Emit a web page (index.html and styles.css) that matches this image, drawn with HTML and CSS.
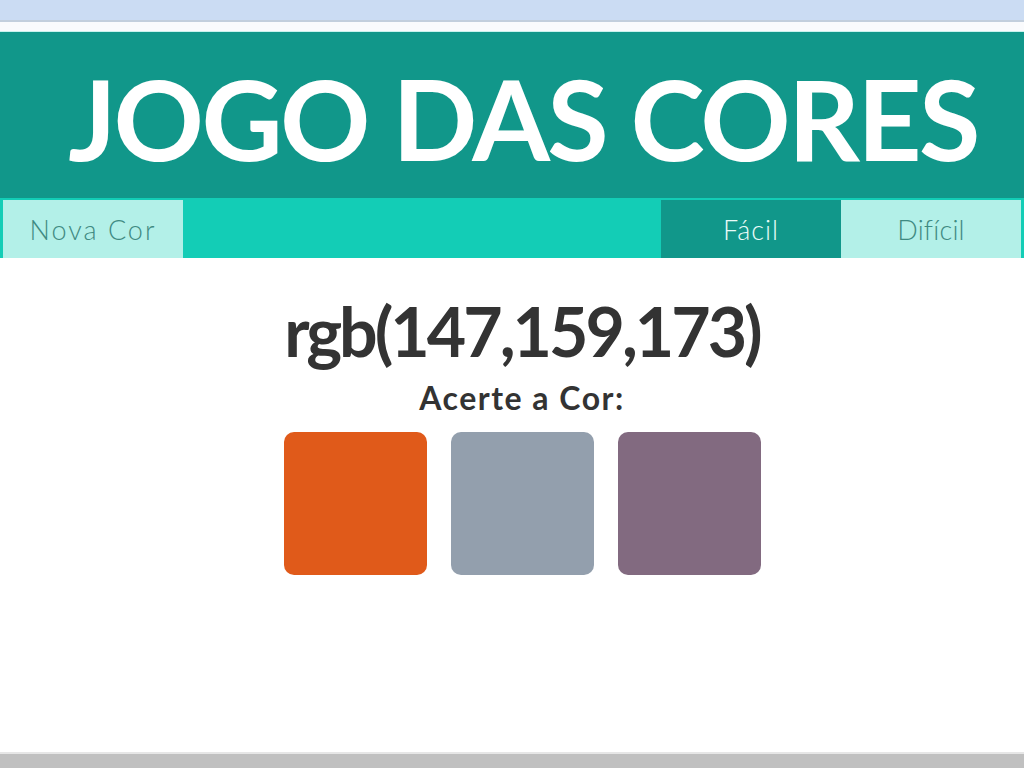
FILE: index.html
```html
<!DOCTYPE html>
<html lang="pt">
<head>
<meta charset="utf-8">
<title>Jogo das Cores</title>
<link rel="stylesheet" href="styles.css">
</head>
<body>
<div class="page">
  <div class="chrome-top"></div>
  <div class="chrome-gap"></div>
  <header class="header">
    <h1 class="title">JOGO DAS CORES</h1>
  </header>
  <nav class="nav">
    <button class="btn btn-light btn-new">Nova Cor</button>
    <span class="nav-spacer"></span>
    <button class="btn btn-active">Fácil</button>
    <button class="btn btn-light btn-hard">Difícil</button>
  </nav>
  <main class="main">
    <h2 class="rgb">rgb(147,159,173)</h2>
    <p class="hint">Acerte a Cor:</p>
    <div class="squares">
      <div class="square sq-orange"></div>
      <div class="square sq-grey"></div>
      <div class="square sq-purple"></div>
    </div>
  </main>
  <div class="chrome-bottom"></div>
</div>
</body>
</html>
```

FILE: styles.css
```css
* { box-sizing: border-box; }
html, body { margin: 0; padding: 0; }
body {
  width: 1024px;
  height: 768px;
  overflow: hidden;
  background: #ffffff;
  font-family: "Lato", "Noto Sans", sans-serif;
}
.page {
  display: flex;
  flex-direction: column;
  height: 768px;
}
.chrome-top {
  height: 22px;
  background: #cbdcf3;
  border-bottom: 2px solid #c3cfdd;
}
.chrome-gap {
  height: 10px;
  background: #fafbfd;
  border-bottom: 1px solid #c9f3ee;
}
.header {
  height: 166px;
  background: #11978a;
  display: flex;
  align-items: center;
  justify-content: center;
  padding-left: 22px;
}
.title {
  margin: 0;
  color: #ffffff;
  font-family: "Lato", sans-serif;
  font-weight: 700;
  font-size: 112px;
  line-height: 1;
  letter-spacing: -2.7px;
  padding-top: 6px;
}
.nav {
  height: 60px;
  background: #13cdb6;
  display: flex;
  padding: 2px 3px 0 3px;
}
.btn {
  border: 0;
  margin: 0;
  width: 180px;
  height: 58px;
  font-family: "Lato", sans-serif;
  font-weight: 300;
  font-size: 27px;
  letter-spacing: 1px;
  padding: 0;
  cursor: pointer;
}
.btn-light {
  background: #b3f0e8;
  color: #3f8a82;
}
.btn-new { letter-spacing: 2px; }
.btn-hard { letter-spacing: 0.2px; }
.btn-active {
  background: #11978a;
  color: #eafcf9;
}
.nav-spacer { flex: 1; }
.main {
  flex: 1;
  display: flex;
  flex-direction: column;
  align-items: center;
  padding-left: 20px;
  padding-top: 34px;
}
.rgb {
  margin: 0;
  font-family: "Lato", sans-serif;
  font-weight: 700;
  font-size: 68px;
  line-height: 78px;
  letter-spacing: -3px;
  color: #333333;
}
.hint {
  margin: 10px 0 0 0;
  font-family: "Lato", sans-serif;
  font-weight: 700;
  font-size: 32px;
  line-height: 36px;
  letter-spacing: 1.5px;
  color: #333333;
}
.squares {
  display: flex;
  gap: 24px;
  margin-top: 16px;
}
.square {
  width: 143px;
  height: 143px;
  border-radius: 10px;
}
.sq-orange { background: #e05a1a; }
.sq-grey { background: #939fad; }
.sq-purple { background: #826a80; }
.chrome-bottom {
  height: 16px;
  background: #c0c0c0;
  border-top: 2px solid #e6e6e6;
}
```
